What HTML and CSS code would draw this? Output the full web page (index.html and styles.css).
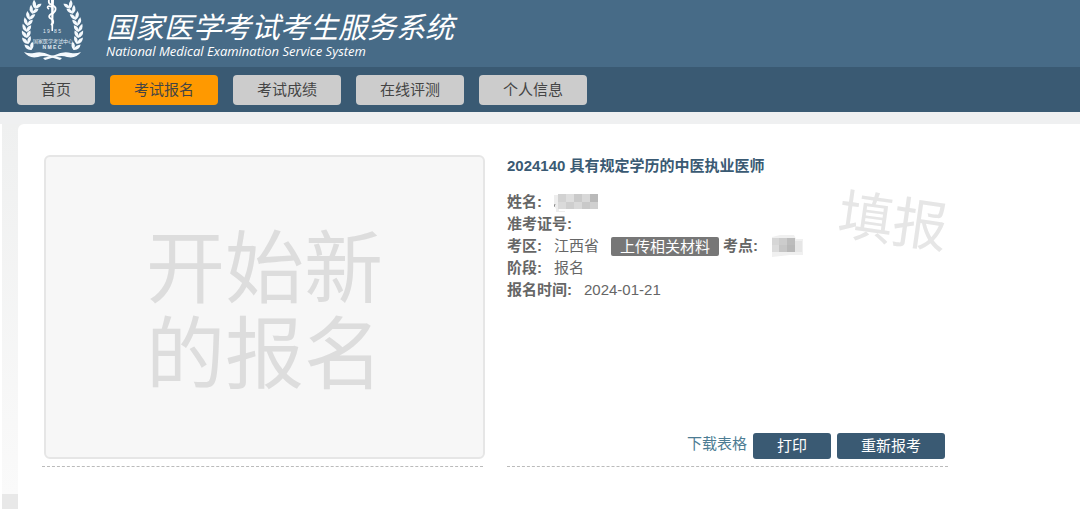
FILE: index.html
```
<!DOCTYPE html>
<html lang="zh-CN">
<head>
  <meta charset="UTF-8">
  <meta name="viewport" content="width=device-width, initial-scale=1">
  <title>国家医学考试考生服务系统</title>
  <link rel="stylesheet" href="styles.css">
</head>
<body>
  <header class="site-header">
    <svg class="logo" width="64" height="62" viewBox="20 0 64 62" aria-hidden="true">
      <defs>
        <g id="leaf" fill="#f4f9fd">
          <path d="M0 2Q-6 0 -4.500 -6Q-1 -4 0 0Z"/>
          <path d="M-.5 2Q-1 -4 4 -5Q4.500 0 -.5 2Z"/>
        </g>
        <g id="branch">
          <use href="#leaf" transform="translate(36 7) rotate(22)"/>
          <use href="#leaf" transform="translate(33 12) rotate(22)"/>
          <use href="#leaf" transform="translate(30 18) rotate(16)"/>
          <use href="#leaf" transform="translate(28 24) rotate(10)"/>
          <use href="#leaf" transform="translate(27 30) rotate(2)"/>
          <use href="#leaf" transform="translate(27 36) rotate(-6)"/>
          <use href="#leaf" transform="translate(28 42) rotate(-16)"/>
          <use href="#leaf" transform="translate(31 48) rotate(-26)"/>
          <path d="M24 52Q29 54 34 53Q42 51 50 55L62 58L60 60L50 57Q43 55 38 57Q29 59 24 52Z" fill="#f4f9fd"/>
        </g>
      </defs>
      <use href="#branch"/>
      <use href="#branch" transform="translate(105 0) scale(-1 1)"/>
      <path d="M51 0H54L53 31H51.500Z" fill="#fff"/>
      <path d="M49 0Q48 4 52 5Q57 7 55 11Q54 13 51 14Q48 16 50 18Q54 20 53 23L51 25" fill="none" stroke="#fff" stroke-width="1.800"/>
      <path d="M49 9Q46 7 49 6L52 7" fill="none" stroke="#fff" stroke-width="1.600"/>
      <text class="logo-text" x="52" y="33" text-anchor="middle">1 9 &#160; 8 5</text>
      <text class="logo-text" x="53" y="43" text-anchor="middle">国家医学考试中心</text>
      <text class="logo-text abbr" x="52" y="49" text-anchor="middle">N M E C</text>
    </svg>
    <div class="site-title">
      <h1>国家医学考试考生服务系统</h1>
      <p>National Medical Examination Service System</p>
    </div>
  </header>

  <nav class="main-nav">
    <a href="#">首页</a>
    <a href="#" class="active">考试报名</a>
    <a href="#">考试成绩</a>
    <a href="#">在线评测</a>
    <a href="#">个人信息</a>
  </nav>

  <div class="strip"></div>

  <main class="page">
    <div class="panel">
      <section class="column new">
        <button type="button" class="new-entry">开始新<br>的报名</button>
      </section>

      <section class="column entry">
        <h2>2024140 具有规定学历的中医执业医师</h2>
        <span class="stamp">填报</span>
        <dl class="info">
          <div>
            <dt>姓名:</dt>
            <dd>
              <svg class="mask" width="48" height="20" viewBox="3 0 48 20" aria-hidden="true">
                <path d="M0 3H8V19H14V20H5V17L3 14L0 10Z" fill="#ededed"/>
                <path d="M4 12L3 15" stroke="#888"/>
                <rect x="7" y="2" width="8" height="8" fill="#d2d2d2"/>
                <rect x="15" y="2" width="8" height="8" fill="#dedede"/>
                <rect x="23" y="2" width="8" height="8" fill="#cacaca"/>
                <rect x="31" y="2" width="8" height="8" fill="#d8d8d8"/>
                <rect x="39" y="2" width="8" height="8" fill="#b9b9b9"/>
                <rect x="7" y="10" width="8" height="7" fill="#dadada"/>
                <rect x="15" y="10" width="8" height="7" fill="#cecece"/>
                <rect x="23" y="10" width="8" height="7" fill="#d9d9d9"/>
                <rect x="31" y="10" width="8" height="7" fill="#c9c9c9"/>
                <rect x="39" y="10" width="8" height="7" fill="#d0d0d0"/>
              </svg>
            </dd>
          </div>
          <div>
            <dt>准考证号:</dt>
            <dd></dd>
          </div>
          <div>
            <dt>考区:</dt>
            <dd>江西省</dd>
            <dd class="site">
              <button type="button" class="upload">上传相关材料</button>
              <b>考点:</b>
            </dd>
            <dd>
              <svg class="mask" width="34" height="22" viewBox="0 0 34 22" aria-hidden="true">
                <path d="M2 2L10 0H24L26 4H33V20H20L2 22Z" fill="#f0f0f0"/>
                <rect x="2" y="3" width="7" height="7" fill="#d6d6d6"/>
                <rect x="9" y="3" width="8" height="7" fill="#cccccc"/>
                <rect x="17" y="3" width="8" height="7" fill="#bcbcbc"/>
                <rect x="2" y="10" width="7" height="7" fill="#dcdcdc"/>
                <rect x="9" y="10" width="8" height="7" fill="#c6c6c6"/>
                <rect x="17" y="10" width="8" height="7" fill="#b8b8b8"/>
                <rect x="25" y="6" width="7" height="11" fill="#e6e6e6"/>
              </svg>
            </dd>
          </div>
          <div>
            <dt>阶段:</dt>
            <dd>报名</dd>
          </div>
          <div>
            <dt>报名时间:</dt>
            <dd>2024-01-21</dd>
          </div>
        </dl>
        <div class="actions">
          <a href="#">下载表格</a>
          <button type="button">打印</button>
          <button type="button">重新报考</button>
        </div>
      </section>
    </div>
  </main>
</body>
</html>
```
FILE: styles.css
```
* {
  box-sizing: border-box;
}
body {
  margin: 0;
  min-height: 100vh;
  display: flex;
  flex-direction: column;
  font-family: "Liberation Sans", "Noto Sans CJK SC", sans-serif;
  font-size: 15px;
  line-height: 22px;
  color: #666;
  background: #fff;
}
h1, h2, p, dl, dd {
  margin: 0;
}
button {
  font-family: inherit;
  font-size: inherit;
  border: none;
  cursor: pointer;
}

/* Header */
.site-header {
  display: flex;
  gap: 22px;
  height: 67px;
  padding-left: 20px;
  background: #476b87;
  color: #fff;
}
.logo {
  flex: none;
}
.logo-text {
  fill: #e4edf4;
  font-size: 5px;
}
.logo-text.abbr {
  font-weight: bold;
}
.site-title {
  padding-top: 13px;
  font-style: italic;
}
.site-title h1 {
  font-size: 29px;
  line-height: 31px;
  font-weight: normal;
}
.site-title p {
  font-family: "Open Sans", sans-serif;
  font-size: 13px;
  line-height: 15px;
  font-weight: 500;
}

/* Navigation */
.main-nav {
  display: flex;
  gap: 15px;
  padding: 8px 17px 7px;
  background: #3a5a73;
}
.main-nav a {
  padding: 4px 24px;
  border-radius: 4px;
  background: #ccc;
  color: #444;
  text-decoration: none;
}
.main-nav a.active {
  background: #ff9900;
}
.strip {
  height: 12px;
  background: #eff0f1;
}

/* Page with the shaded rail on the left */
.page {
  flex: 1;
  display: flex;
  margin-left: 2px;
  padding-left: 16px;
  background: linear-gradient(#eff0f0, #fafafa calc(100% - 15px), #e8e8e8 calc(100% - 15px));
}
.panel {
  flex: 1;
  display: grid;
  grid-template-columns: repeat(2, minmax(0, 441px));
  gap: 24px;
  padding: 31px 24px 42px;
  background: #fff;
  border-top-left-radius: 6px;
}
.column {
  min-height: 312px;
  padding-bottom: 7px;
  border-bottom: 1px dashed #bbb;
}
.column.new {
  display: flex;
}
.new-entry {
  flex: 1;
  margin: 0 -2px 0 2px;
  padding: 12px 0 0;
  border: 2px solid #e6e6e6;
  border-radius: 6px;
  background: #f7f7f7;
  color: #ddd;
  font-size: 79px;
  line-height: 86px;
}

/* Registration details */
.entry {
  position: relative;
  display: flex;
  flex-direction: column;
}
.entry h2 {
  margin-bottom: 14px;
  font-size: 15px;
  line-height: 22px;
  color: #3a5a73;
}
.info > div {
  display: flex;
  align-items: center;
  gap: 12px;
  height: 22px;
}
.info dt {
  font-weight: bold;
}
.mask {
  display: block;
}
.site {
  display: flex;
  align-items: center;
  gap: 4px;
}
.upload {
  padding: 0 9px;
  border-radius: 2px;
  background: #777;
  color: #fff;
  line-height: 19px;
}
.stamp {
  position: absolute;
  top: 34px;
  right: 0;
  font-size: 55px;
  line-height: 66px;
  color: #e6e6e6;
  transform: rotate(8deg);
}
.actions {
  display: flex;
  align-items: flex-start;
  justify-content: flex-end;
  gap: 6px;
  margin-top: auto;
  padding-right: 3px;
}
.actions a {
  color: #4c7c93;
  text-decoration: none;
}
.actions button {
  padding: 2px 24px;
  border-radius: 3px;
  background: #3a5a73;
  color: #fff;
  line-height: 22px;
}
```
